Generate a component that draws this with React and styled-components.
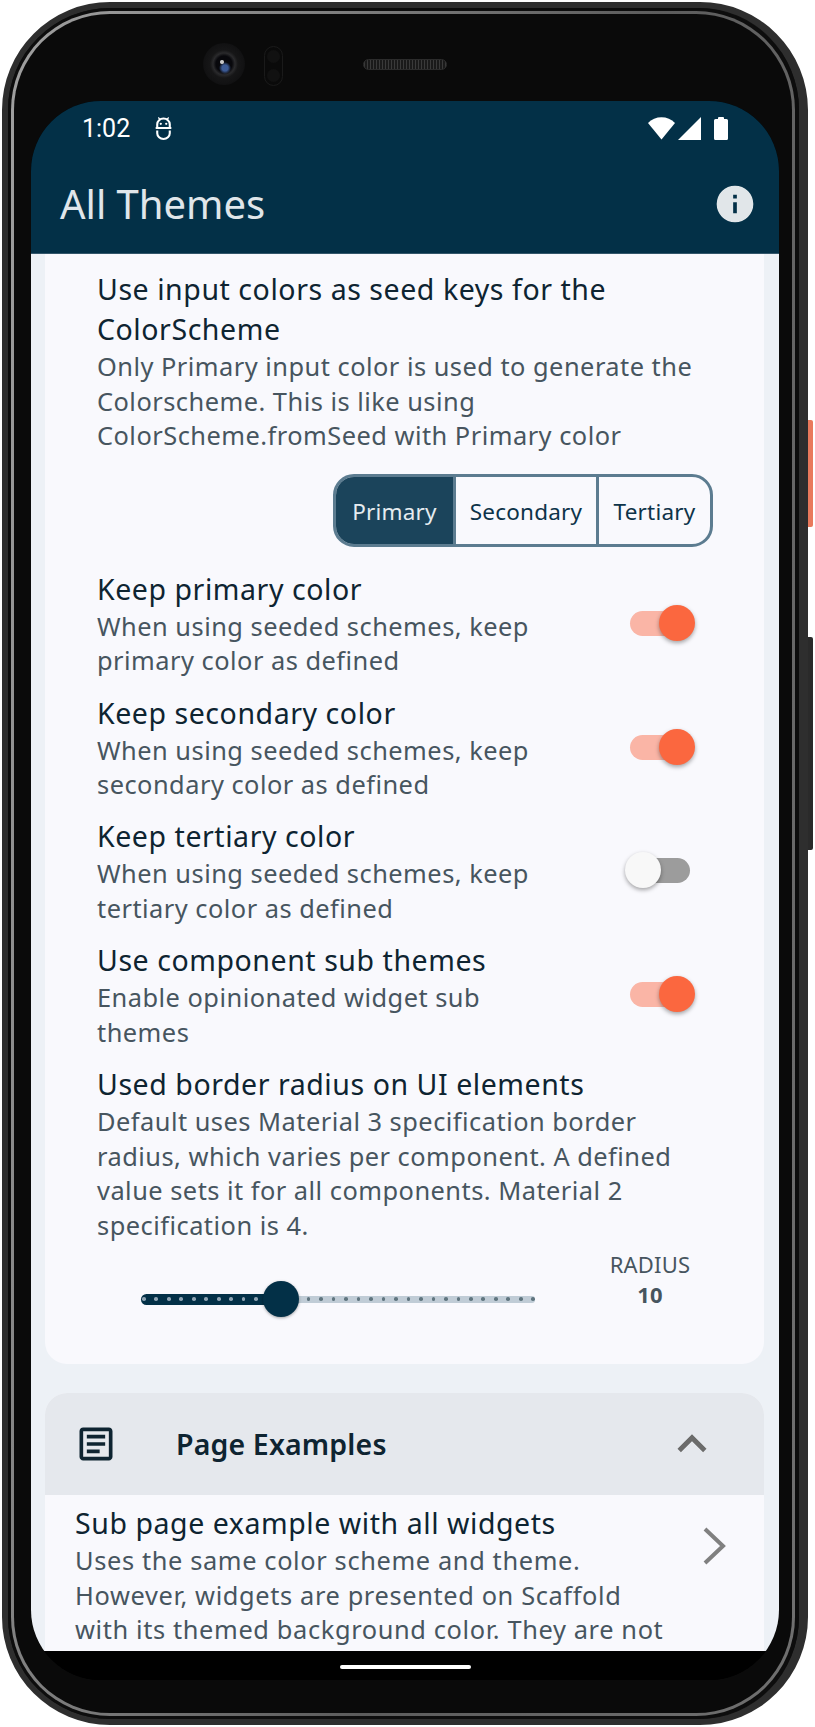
import React from 'react';
import styled, { createGlobalStyle } from 'styled-components';

const GlobalStyle = createGlobalStyle`
  html, body {
    margin: 0;
    padding: 0;
    background: #ffffff;
    overflow: hidden;
  }
  * {
    box-sizing: border-box;
  }
`;

const Page = styled.div`
  width: 815px;
  height: 1727px;
  padding: 2px 7px 2px 2px;
  font-family: 'Noto Sans', sans-serif;
`;

const Phone = styled.div`
  position: relative;
  height: 1723px;
  border: solid #2e2e2e;
  border-width: 6px 9px 6px 6px;
  border-radius: 108px;
  background: #111;
`;

const Band = styled.div`
  height: 100%;
  border: solid #0d0d0d;
  border-width: 3px 4px 3px 3px;
  border-radius: 102px;
`;

const Rim = styled.div`
  height: 100%;
  padding: 3px;
  border-radius: 99px;
  background: linear-gradient(100deg, #a0a0a0 0%, #5c5c5c 60%, #707070 100%);
`;

const Bezel = styled.div`
  height: 100%;
  border-radius: 96px;
  background: #0a0a0a;
  padding: 0 13px 0 17px;
  display: flex;
  flex-direction: column;
`;

const SideButton = styled.div`
  position: absolute;
  right: -14px;
  top: ${p => p.$top}px;
  width: 5px;
  height: ${p => p.$height}px;
  border-radius: 0 2px 2px 0;
  background: ${p => p.$color};
`;

const SensorRow = styled.div`
  height: 87px;
  flex: none;
  display: flex;
  align-items: flex-start;
  padding: 29px 0 0 172px;
`;

const Camera = styled.div`
  width: 42px;
  height: 42px;
  border-radius: 50%;
  background:
    radial-gradient(circle at 19px 19px, #c8c8c8 0 1.5px, transparent 2.5px),
    radial-gradient(circle at 22px 25px, #3c5a94 0 3px, transparent 6px),
    radial-gradient(circle at 21px 21px, #08080c 0 8px, #2a2a2c 11px, #161617 14px, #111112 21px);
`;

const Sensor = styled.div`
  width: 19px;
  height: 40px;
  margin: 3px 0 0 19px;
  border: 1px solid #1a1a1a;
  border-radius: 10px;
  display: flex;
  flex-direction: column;
  align-items: center;
  justify-content: space-around;
`;

const SensorDot = styled.div`
  width: 13px;
  height: 13px;
  border-radius: 50%;
  background: #111;
`;

const Speaker = styled.div`
  width: 84px;
  height: 11px;
  margin: 16px 0 0 80px;
  border: 1px solid #2c2c2c;
  border-radius: 6px;
  background: repeating-linear-gradient(90deg, #3a3a3a 0 1px, #1a1a1a 1px 3px);
`;

const Screen = styled.div`
  height: 1579px;
  flex: none;
  border-radius: 70px;
  overflow: hidden;
  display: flex;
  flex-direction: column;
  background: #000;
`;

const StatusBar = styled.div`
  height: 54px;
  flex: none;
  background: #033047;
  display: flex;
  align-items: center;
  padding: 0 51px 0 51px;
  color: #fff;
`;

const Time = styled.span`
  font-family: Roboto, sans-serif;
  font-size: 25px;
`;

const RobotIcon = styled.svg`
  width: 17px;
  height: 23px;
  margin-left: 25px;
`;

const StatusIcons = styled.div`
  margin-left: auto;
  display: flex;
  align-items: center;
  gap: 3px;
`;

const BatteryIcon = styled.svg`
  margin-left: 10px;
`;

const AppBar = styled.div`
  height: 99px;
  flex: none;
  background: #033047;
  border-bottom: 1px solid #33566a;
  display: flex;
  align-items: center;
  justify-content: space-between;
  padding: 0 22px 1px 29px;
`;

const AppTitle = styled.h1`
  margin: 0;
  font-size: 40px;
  font-weight: 400;
  color: #e0e6ea;
`;

const Content = styled.div`
  flex: 1;
  min-height: 0;
  overflow: hidden;
  background: #edf1f6;
  padding: 0 15px 0 14px;
`;

const Card = styled.section`
  background: #f9f9fd;
  border-radius: ${p => p.$top ? '22px 22px 0 0' : '0 0 22px 22px'};
  overflow: hidden;
  margin-bottom: 29px;
`;

const SettingsBody = styled.div`
  padding: 15px 54px 47px 52px;
`;

const Title = styled.div`
  font-size: 28.5px;
  line-height: 40px;
  letter-spacing: 0.56px;
  color: #0e2431;
`;

const Sub = styled.div`
  font-size: 25.4px;
  line-height: 34.6px;
  letter-spacing: 0.48px;
  color: #47555f;
`;

const PanelSub = styled(Sub)`
  letter-spacing: 0.62px;
`;

const Segments = styled.div`
  display: flex;
  justify-content: flex-end;
  margin: 21px -3px 22px 0;
`;

const SegmentGroup = styled.div`
  display: flex;
  height: 73px;
  border: 3px solid #5c7c90;
  border-radius: 21px;
  overflow: hidden;
`;

const Segment = styled.div`
  width: ${p => p.$width}px;
  display: flex;
  align-items: center;
  justify-content: center;
  padding-top: 2px;
  font-size: 22.5px;
  letter-spacing: 0.2px;
  background: ${p => p.$active ? '#1b445b' : 'transparent'};
  color: ${p => p.$active ? '#e6ecf0' : '#0d3349'};
  & + & {
    border-left: 3px solid #5c7c90;
  }
`;

const Row = styled.div`
  display: flex;
  align-items: flex-start;
  justify-content: space-between;
  margin-bottom: 14.6px;
`;

const RowText = styled.div`
  width: 490px;
`;

const SwitchTrack = styled.div`
  position: relative;
  flex: none;
  width: ${p => p.$on ? '62px' : '61px'};
  height: 25px;
  margin: 42px ${p => p.$on ? '18px' : '20px'} 0 0;
  border-radius: 13px;
  background: ${p => p.$on ? '#fab5a6' : '#9c9c9c'};
`;

const SwitchThumb = styled.div`
  position: absolute;
  top: -6px;
  ${p => p.$on ? 'right: -3px;' : 'left: -4px;'}
  width: 36px;
  height: 36px;
  border-radius: 50%;
  background: ${p => p.$on ? '#fb673f' : '#f8f8f8'};
  box-shadow: 0 2px 4px rgba(0, 0, 0, 0.35);
`;

const SliderRow = styled.div`
  display: flex;
  align-items: flex-start;
  justify-content: space-between;
  margin-top: 7px;
`;

const Slider = styled.div`
  display: flex;
  align-items: center;
  margin: 32px 0 0 44px;
`;

const SliderFill = styled.div`
  width: 140px;
  height: 11px;
  border-radius: 6px 0 0 6px;
  background: #033047;
  display: flex;
  align-items: center;
  gap: 8.9px;
  padding-left: 1px;
  overflow: hidden;
`;

const SliderRest = styled.div`
  width: 254px;
  height: 7px;
  border-radius: 0 3px 3px 0;
  background: #c0ccd6;
  display: flex;
  align-items: center;
  justify-content: flex-end;
  gap: 8.9px;
  overflow: hidden;
`;

const Dot = styled.span`
  flex: none;
  width: 3.6px;
  height: 3.6px;
  border-radius: 50%;
  background: ${p => p.$light ? '#8fa4b3' : '#60757f'};
`;

const SliderThumb = styled.div`
  flex: none;
  width: 36px;
  height: 36px;
  margin: 0 -18px;
  border-radius: 50%;
  background: #033047;
  box-shadow: 0 1px 3px rgba(0, 0, 0, 0.35);
  position: relative;
`;

const RadiusLabel = styled.div`
  width: 120px;
  text-align: center;
  font-size: 22px;
  line-height: 30px;
  letter-spacing: 0.2px;
  color: #47555f;
`;

const RadiusValue = styled.div`
  font-weight: 700;
`;

const PanelHeader = styled.div`
  height: 102px;
  background: #e5e8ed;
  display: flex;
  align-items: center;
  padding: 0 43px 0 29px;
`;

const PanelTitle = styled.div`
  margin-left: 58px;
  font-size: 28.5px;
  font-weight: 600;
  letter-spacing: 0.15px;
  color: #0e2431;
`;

const PanelChevron = styled.svg`
  margin-left: auto;
  width: 58px;
  height: 58px;
`;

const PanelItem = styled.div`
  display: flex;
  align-items: flex-start;
  padding: 8px 36px 60px 30px;
`;

const PanelText = styled.div`
  width: 597px;
`;

const ItemChevron = styled.svg`
  margin-left: auto;
  margin-top: 23px;
  width: 26px;
  height: 40px;
`;

const NavBar = styled.div`
  height: 29px;
  flex: none;
  background: #000;
  display: flex;
  justify-content: center;
  padding-top: 14px;
`;

const HomePill = styled.div`
  width: 131px;
  height: 4px;
  border-radius: 2px;
  background: #fff;
`;

const ToggleSwitch = ({ on }) => (
  <SwitchTrack $on={on}>
    <SwitchThumb $on={on} />
  </SwitchTrack>
);

const SettingRow = ({ title, lines, on }) => (
  <Row>
    <RowText>
      <Title>{title}</Title>
      <Sub>{lines[0]}<br />{lines[1]}</Sub>
    </RowText>
    <ToggleSwitch on={on} />
  </Row>
);

const dots = (count, light) =>
  Array.from({ length: count }, (_, i) => <Dot key={i} $light={light} />);

export default function App() {
  return (
    <Page>
      <GlobalStyle />
      <Phone>
        <SideButton $top={412} $height={107} $color="#e9795c" />
        <SideButton $top={629} $height={213} $color="#2a2a2a" />
        <Band>
          <Rim>
            <Bezel>
              <SensorRow>
                <Camera />
                <Sensor>
                  <SensorDot />
                  <SensorDot />
                </Sensor>
                <Speaker />
              </SensorRow>
              <Screen>
                <StatusBar>
                  <Time>1:02</Time>
                  <RobotIcon viewBox="0 0 16 22" fill="none" stroke="#fff" strokeWidth="2">
                    <path d="M2 9.5V7a6 5.5 0 0 1 12 0v2.5" />
                    <path d="M0.500 10.500h15" />
                    <path d="M2 13v2.5a6 5.5 0 0 0 12 0V13" />
                    <path d="M3 0.5l2 2M13 0.5l-2 2" strokeWidth="1.2" />
                    <circle cx="5.4" cy="6.5" r="1.1" fill="#fff" stroke="none" />
                    <circle cx="10.6" cy="6.5" r="1.1" fill="#fff" stroke="none" />
                  </RobotIcon>
                  <StatusIcons>
                    <svg width="27" height="23" viewBox="0 0 27 23">
                      <path d="M0 6C7-1.6 20-1.6 27 6L13.5 22.5z" fill="#fff" />
                    </svg>
                    <svg width="23" height="23" viewBox="0 0 23 23">
                      <path d="M23 0V23H0z" fill="#fff" />
                    </svg>
                    <BatteryIcon width="14" height="23" viewBox="0 0 14 23">
                      <path d="M4 2V1q0-1 1-1h4q1 0 1 1v1h2.5q1.5 0 1.5 1.5V21.5q0 1.5-1.5 1.5h-11Q0 23 0 21.5V3.500Q0 2 1.500 2z" fill="#fff" />
                    </BatteryIcon>
                  </StatusIcons>
                </StatusBar>
                <AppBar>
                  <AppTitle>All Themes</AppTitle>
                  <svg width="44" height="44" viewBox="0 0 24 24">
                    <path
                      fill="#e1e6e9"
                      fillRule="evenodd"
                      d="M12 2a10 10 0 1 0 0 20 10 10 0 0 0 0-20zM11 7h2v2h-2zM11 11h2v6h-2z"
                    />
                  </svg>
                </AppBar>
                <Content>
                  <Card>
                    <SettingsBody>
                      <Title>Use input colors as seed keys for the ColorScheme</Title>
                      <Sub>
                        Only Primary input color is used to generate the Colorscheme. This is like
                        using ColorScheme.fromSeed with Primary color
                      </Sub>
                      <Segments>
                        <SegmentGroup>
                          <Segment $width={117} $active>Primary</Segment>
                          <Segment $width={143}>Secondary</Segment>
                          <Segment $width={114}>Tertiary</Segment>
                        </SegmentGroup>
                      </Segments>
                      <SettingRow
                        title="Keep primary color"
                        lines={['When using seeded schemes, keep', 'primary color as defined']}
                        on
                      />
                      <SettingRow
                        title="Keep secondary color"
                        lines={['When using seeded schemes, keep', 'secondary color as defined']}
                        on
                      />
                      <SettingRow
                        title="Keep tertiary color"
                        lines={['When using seeded schemes, keep', 'tertiary color as defined']}
                      />
                      <SettingRow
                        title="Use component sub themes"
                        lines={['Enable opinionated widget sub', 'themes']}
                        on
                      />
                      <Title>Used border radius on UI elements</Title>
                      <Sub>
                        Default uses Material 3 specification border radius, which varies per
                        component. A defined value sets it for all components. Material 2
                        specification is 4.
                      </Sub>
                      <SliderRow>
                        <Slider>
                          <SliderFill>{dots(10, true)}</SliderFill>
                          <SliderThumb />
                          <SliderRest>{dots(19)}</SliderRest>
                        </Slider>
                        <RadiusLabel>
                          RADIUS
                          <RadiusValue>10</RadiusValue>
                        </RadiusLabel>
                      </SliderRow>
                    </SettingsBody>
                  </Card>
                  <Card $top>
                    <PanelHeader>
                      <svg width="44" height="44" viewBox="0 0 24 24" fill="#0e2431">
                        <path d="M19 5v14H5V5h14m0-2H5c-1.1 0-2 .9-2 2v14c0 1.1.9 2 2 2h14c1.1 0 2-.9 2-2V5c0-1.1-.9-2-2-2z" />
                        <path d="M14 17H7v-2h7v2zm3-4H7v-2h10v2zm0-4H7V7h10v2z" />
                      </svg>
                      <PanelTitle>Page Examples</PanelTitle>
                      <PanelChevron viewBox="0 0 24 24" fill="#6b6b6b">
                        <path d="M12 8l-6 6 1.41 1.41L12 10.83l4.59 4.58L18 14z" />
                      </PanelChevron>
                    </PanelHeader>
                    <PanelItem>
                      <PanelText>
                        <Title>Sub page example with all widgets</Title>
                        <PanelSub>
                          Uses the same color scheme and theme. However, widgets are presented on
                          Scaffold with its themed background color. They are not
                        </PanelSub>
                      </PanelText>
                      <ItemChevron viewBox="0 0 26 40" fill="none" stroke="#808080" strokeWidth="4">
                        <path d="M3 3l18 17L3 37" />
                      </ItemChevron>
                    </PanelItem>
                  </Card>
                </Content>
                <NavBar>
                  <HomePill />
                </NavBar>
              </Screen>
            </Bezel>
          </Rim>
        </Band>
      </Phone>
    </Page>
  );
}
